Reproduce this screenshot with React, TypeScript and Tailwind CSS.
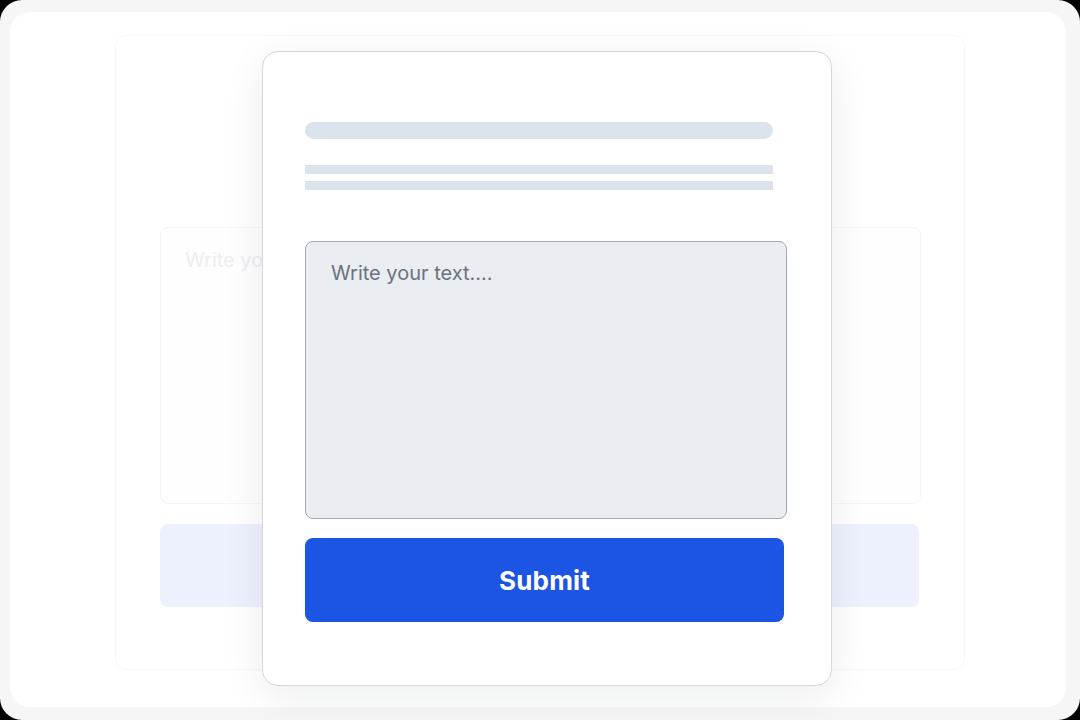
export default function App() {
  return (
    <div className="h-[720px] w-[1080px] bg-black font-['Inter',sans-serif]">
      <div className="h-full rounded-[22px] bg-[#f6f6f7] pb-[13px] pl-[10px] pr-[14px] pt-[12px]">
        <div className="relative h-full rounded-[20px] bg-white pl-[105px] pt-[23px]">
          {/* faded page behind the dialog */}
          <div className="h-[635px] w-[850px] rounded-xl border border-[#f7f8f9] pl-[44px] pt-[191px]">
            <div className="h-[277px] w-[761px] rounded-lg border border-[#f4f5f7] bg-[#fefefe] px-[24px] pt-[17px] text-[20px] text-[#eceef1]">
              Write your text....
            </div>
            <div className="mt-[20px] h-[83px] w-[759px] rounded-lg bg-[#edf1fd]" />
          </div>

          {/* dialog */}
          <div className="absolute left-[252px] top-[39px] h-[635px] w-[570px] rounded-2xl border border-[#d4d7dd] bg-white pl-[42px] pt-[70px] shadow-[0_10px_40px_rgba(15,23,42,0.08)]">
            <div className="h-[17px] w-[468px] rounded-full bg-[#dbe3ec]" />
            <div className="mt-[26px] flex w-[468px] flex-col gap-[7px]">
              <div className="h-[9px] bg-[#dbe3ec]" />
              <div className="h-[9px] bg-[#dbe3ec]" />
            </div>
            <textarea
              readOnly
              placeholder="Write your text...."
              className="mt-[51px] block h-[278px] w-[482px] resize-none rounded-lg border border-[#a3a9b3] bg-[#eaedf1] px-[25px] py-[17px] text-[20px] leading-[28px] outline-none placeholder:text-[#6b7280]"
            />
            <button className="mt-[19px] flex h-[84px] w-[479px] items-center justify-center rounded-lg bg-[#1c54e3] text-[26px] font-bold tracking-[0.2px] text-white">
              Submit
            </button>
          </div>
        </div>
      </div>
    </div>
  );
}
